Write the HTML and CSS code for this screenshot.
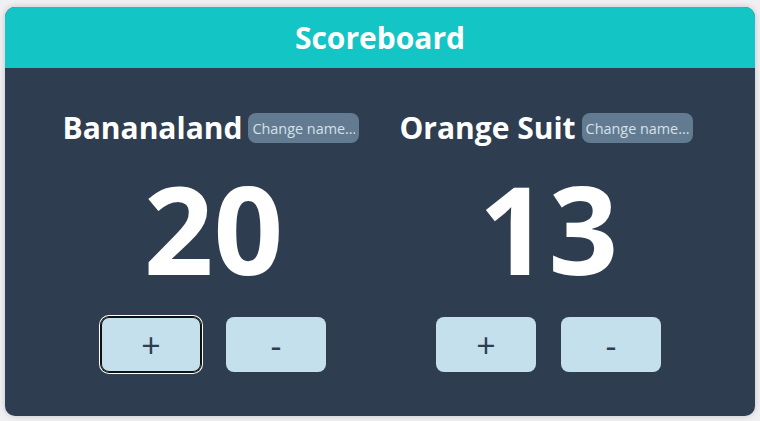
FILE: index.html
```html
<!DOCTYPE html>
<html lang="en">
<head>
<meta charset="utf-8">
<title>Scoreboard</title>
<link rel="stylesheet" href="styles.css">
</head>
<body>
<div class="card">
  <header class="card-header">
    <h1 class="title">Scoreboard</h1>
  </header>
  <main class="teams">
    <section class="team">
      <div class="name-row">
        <h2 class="team-name">Bananaland</h2>
        <input class="name-input" type="text" placeholder="Change name...">
      </div>
      <div class="score">20</div>
      <div class="buttons">
        <button class="btn btn-focus">+</button>
        <button class="btn">-</button>
      </div>
    </section>
    <section class="team">
      <div class="name-row">
        <h2 class="team-name">Orange Suit</h2>
        <input class="name-input" type="text" placeholder="Change name...">
      </div>
      <div class="score">13</div>
      <div class="buttons">
        <button class="btn">+</button>
        <button class="btn">-</button>
      </div>
    </section>
  </main>
</div>
</body>
</html>
```

FILE: styles.css
```css
* { box-sizing: border-box; }
html, body { height: 100%; }
body {
  margin: 0;
  padding: 7px 5px 5px 5px;
  background: #f0f0f2;
  font-family: "Open Sans", "DejaVu Sans", sans-serif;
}
.card {
  width: 750px;
  height: 409px;
  border-radius: 10px;
  overflow: hidden;
  background: #2e3d50;
  box-shadow: 0 0 6px rgba(0,0,0,0.18);
  display: flex;
  flex-direction: column;
}
.card-header {
  height: 61px;
  background: #13c5c4;
  display: flex;
  align-items: center;
  justify-content: center;
}
.title {
  margin: 0;
  color: #ffffff;
  font-size: 30px;
  font-weight: 700;
  line-height: 1;
}
.teams {
  display: flex;
  justify-content: center;
  gap: 35px;
  padding-top: 41px;
  padding-left: 2px;
}
.team {
  width: 300px;
  display: flex;
  flex-direction: column;
  align-items: center;
}
.name-row {
  display: flex;
  align-items: center;
  gap: 6px;
  height: 38px;
  margin-right: 5px;
}
.team-name {
  margin: 0;
  color: #ffffff;
  font-size: 30px;
  font-weight: 700;
  line-height: 38px;
  white-space: nowrap;
}
.name-input {
  width: 111px;
  height: 30px;
  border: none;
  border-radius: 8px;
  background: #627b90;
  color: #d5e0e8;
  font-family: "Open Sans", sans-serif;
  font-size: 14.4px;
  padding: 0 4px;
  outline: none;
}
.name-input::placeholder {
  color: #d5e0e8;
  opacity: 1;
}
.score {
  margin-top: 21px;
  color: #ffffff;
  font-size: 122px;
  font-weight: 700;
  line-height: 120px;
  height: 120px;
}
.buttons {
  margin-top: 29px;
  display: flex;
  gap: 25px;
}
.btn {
  width: 100px;
  height: 55px;
  border: none;
  border-radius: 8px;
  background: #c4e0ec;
  color: #2e3d50;
  font-family: "Open Sans", sans-serif;
  font-size: 34px;
  font-weight: 400;
  line-height: 1;
  padding: 0;
}
.btn-focus {
  box-shadow: inset 0 0 0 1px #111, 0 0 0 1px #111, 0 0 0 2px #fff;
}
```
